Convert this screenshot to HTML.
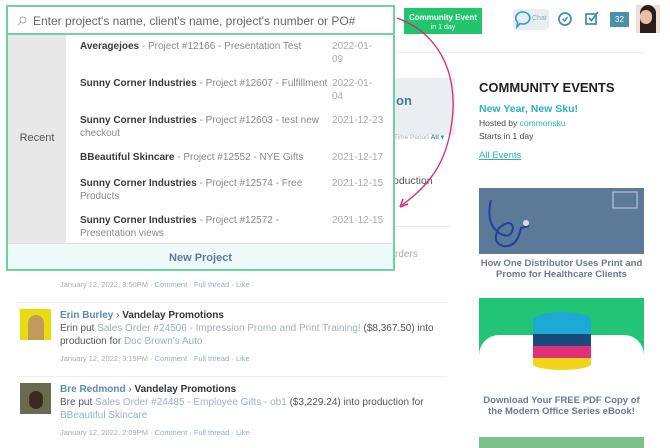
<!DOCTYPE html>
<html><head><meta charset="utf-8"><style>
*{margin:0;padding:0;box-sizing:border-box}
body{width:670px;height:448px;overflow:hidden;background:#fff;font-family:"Liberation Sans",sans-serif;position:relative;color:#333}
.a{position:absolute}
.dd{left:6px;top:5px;width:389px;height:266px;border:2px solid #6fd0a0;background:#fff}
.srch{left:0;top:0;width:385px;height:28px;border-bottom:2px solid #6fd0a0;font-size:12px;color:#666;padding:7px 0 0 25px}
.rec{left:0;top:28px;width:58px;height:208px;background:#e8e8e8;font-size:11px;color:#555;text-align:center;padding-top:97px}
.row{left:72px;width:250px;font-size:10px;line-height:13px;color:#888}
.row b{color:#3a3a3a}
.dt{left:324px;font-size:10px;color:#aaa;line-height:13px;width:60px}
.np{left:0;top:236px;width:385px;height:26px;background:#eefafa;border-top:1px solid #dde;font-size:11px;color:#5c7a99;font-weight:bold;text-align:center;padding-top:8px}
.post{left:60px;font-size:10px;line-height:13px;color:#555;width:390px}
.post .n{color:#5b8bb0;font-weight:bold}
.post .v{color:#333;font-weight:bold}
.post .l{color:#9ab0c8}
.meta{font-size:7.5px;color:#aaa;margin-top:4px}
.meta span{color:#8fb0c8}
.av{left:20px;width:31px;height:31px}
.hr{height:1px;background:#eee}
</style></head><body>
<div class="a" style="left:404px;top:8px;width:78px;height:26px;background:#22c56e;color:#fff;font-size:8px;font-weight:bold;text-align:center;padding-top:5px;line-height:9px">Community Event<br><span style="font-weight:normal;font-size:7px">in 1 day</span></div>
<div class="a" style="left:513px;top:9px;width:36px;height:21px;background:#e6eff3;border-radius:4px"></div>
<svg class="a" style="left:514px;top:10px" width="18" height="19"><path d="M9 2a7 6 0 1 1 -3 11.5l-3 3.5 0.5-5A7 6 0 0 1 9 2z" fill="none" stroke="#3a98c6" stroke-width="1.6"/></svg>
<div class="a" style="left:532px;top:15px;font-size:7px;color:#9ab">Chat</div>
<svg class="a" style="left:557px;top:11px" width="16" height="16"><circle cx="8" cy="8" r="6" fill="none" stroke="#3a8fb0" stroke-width="1.7"/><path d="M5.5 8l2 2 3-4" fill="none" stroke="#3a8fb0" stroke-width="1.5"/></svg>
<svg class="a" style="left:584px;top:10px" width="16" height="16"><rect x="2" y="4" width="10" height="10" fill="none" stroke="#3a8fb0" stroke-width="1.7"/><path d="M5 8l2.5 2.5L14 2" fill="none" stroke="#3a8fb0" stroke-width="1.8"/></svg>
<div class="a" style="left:610px;top:12px;width:19px;height:15px;background:#4a90a8;color:#fff;font-size:8px;text-align:center;padding-top:3px">32</div>
<div class="a" style="left:636px;top:5px;width:24px;height:28px;background:#f1e0d8"><div style="margin:0 auto;width:16px;height:28px;background:#2b1d18;border-radius:8px 8px 0 0"></div></div>
<div class="a" style="left:640px;top:10px;width:12px;height:14px;background:#e8c0aa;border-radius:6px"></div>
<div class="a hr" style="left:395px;top:52px;width:250px"></div>
<div class="a" style="left:395px;top:78px;width:60px;height:57px;background:#e9eef1"></div>
<div class="a" style="left:396px;top:93px;font-size:13px;font-weight:bold;color:#4a7a95">on</div>
<div class="a" style="left:394px;top:133px;font-size:6.5px;color:#aaa">Time Period <b style="color:#3a8fb0">All ▾</b></div>
<div class="a" style="left:393px;top:175px;font-size:10.5px;color:#555">oduction</div>
<div class="a hr" style="left:395px;top:226px;width:55px"></div>
<div class="a" style="left:395px;top:249px;font-size:10px;color:#aaa">rders</div>
<div class="a" style="left:479px;top:80px;font-size:13px;font-weight:bold;color:#222">COMMUNITY EVENTS</div>
<div class="a" style="left:479px;top:103px;font-size:10.5px;font-weight:bold;color:#2bb0c8">New Year, New Sku!</div>
<div class="a" style="left:479px;top:118px;font-size:8.5px;color:#444">Hosted by <span style="color:#2bb0c8">commonsku</span></div>
<div class="a" style="left:479px;top:131px;font-size:8.5px;color:#444">Starts in 1 day</div>
<div class="a" style="left:479px;top:150px;font-size:9.5px;color:#2bb0c8;text-decoration:underline">All Events</div>
<div class="a" style="left:479px;top:188px;width:165px;height:66px;background:#5a7a97"></div>
<svg class="a" style="left:479px;top:188px" width="165" height="66"><path d="M12 12q-6 25 10 34q10 5 12 -6q-2 -10 -14 0q-8 14 4 18q14 2 18 -18 l8 -2" fill="none" stroke="#2040a8" stroke-width="2"/><circle cx="47" cy="35" r="3" fill="#ddd"/><rect x="134" y="4" width="24" height="16" fill="none" stroke="#ccd" stroke-width="1"/></svg>
<div class="a" style="left:479px;top:258px;width:165px;text-align:center;font-size:9.5px;line-height:11px;font-weight:bold;color:#6a7a90">How One Distributor Uses Print and Promo for Healthcare Clients</div>
<div class="a" style="left:479px;top:298px;width:165px;height:90px;background:#22c576"></div>
<div class="a" style="left:479px;top:335px;width:165px;height:53px;background:#fff;border-radius:20px 20px 0 0"></div>
<div class="a" style="left:533px;top:312px;width:58px;height:16px;background:#1ea8d4;border-radius:50%"></div>
<div class="a" style="left:533px;top:320px;width:58px;height:14px;background:#1ea8d4"></div>
<div class="a" style="left:533px;top:334px;width:58px;height:12px;background:#174c7a"></div>
<div class="a" style="left:533px;top:346px;width:58px;height:12px;background:#e0307a"></div>
<div class="a" style="left:533px;top:358px;width:58px;height:12px;background:#f2d41a;border-radius:0 0 29px 29px/0 0 6px 6px"></div>
<div class="a" style="left:479px;top:395px;width:165px;text-align:center;font-size:9.5px;line-height:11px;font-weight:bold;color:#6a7a90">Download Your FREE PDF Copy of the Modern Office Series eBook!</div>
<div class="a" style="left:479px;top:437px;width:165px;height:11px;background:#7cc08a"></div>
<div class="a hr" style="left:17px;top:302px;width:430px"></div>
<div class="a" style="left:60px;top:280px;font-size:7.5px;color:#aaa">January 12, 2022, 3:50PM · <span style="color:#8fb0c8">Comment</span> · <span style="color:#8fb0c8">Full thread</span> · <span style="color:#8fb0c8">Like</span></div>
<div class="a av" style="top:309px;background:#e6dc10"><div style="margin:6px auto 0;width:16px;height:25px;background:#c49a5a;border-radius:8px 8px 0 0"></div></div>
<div class="a post" style="top:309px"><span class="n">Erin Burley</span> › <span class="v">Vandelay Promotions</span><br>Erin put <span class="l">Sales Order #24506 - Impression Promo and Print Training!</span> ($8,367.50) into production for <span class="l">Doc Brown's Auto</span><div class="meta">January 12, 2022, 3:19PM · <span>Comment</span> · <span>Full thread</span> · <span>Like</span></div></div>
<div class="a hr" style="left:17px;top:376px;width:430px"></div>
<div class="a av" style="top:383px;background:#6a6a52"><div style="margin:8px auto 0;width:14px;height:18px;background:#3a2a20;border-radius:7px"></div></div>
<div class="a post" style="top:383px"><span class="n">Bre Redmond</span> › <span class="v">Vandelay Promotions</span><br>Bre put <span class="l">Sales Order #24485 - Employee Gifts - ob1</span> ($3,229.24) into production for <span class="l">BBeautiful Skincare</span><div class="meta">January 12, 2022, 2:09PM · <span>Comment</span> · <span>Full thread</span> · <span>Like</span></div></div>
<div class="a dd">
<div class="a srch">Enter project's name, client's name, project's number or PO#</div>
<svg class="a" style="left:9px;top:9px" width="10" height="10"><circle cx="6" cy="4" r="3" fill="none" stroke="#aaa"/><path d="M4 6L1 9" stroke="#aaa"/></svg>
<div class="a rec">Recent</div>
<div class="a row" style="top:33px"><b>Averagejoes</b> - Project #12166 - Presentation Test</div><div class="a dt" style="top:33px">2022-01-<br>09</div>
<div class="a row" style="top:70px;width:260px"><b>Sunny Corner Industries</b> - Project #12607 - Fulfillment</div><div class="a dt" style="top:70px">2022-01-<br>04</div>
<div class="a row" style="top:107px"><b>Sunny Corner Industries</b> - Project #12603 - test new checkout</div><div class="a dt" style="top:107px">2021-12-23</div>
<div class="a row" style="top:144px"><b>BBeautiful Skincare</b> - Project #12552 - NYE Gifts</div><div class="a dt" style="top:144px">2021-12-17</div>
<div class="a row" style="top:170px"><b>Sunny Corner Industries</b> - Project #12574 - Free Products</div><div class="a dt" style="top:170px">2021-12-15</div>
<div class="a row" style="top:207px"><b>Sunny Corner Industries</b> - Project #12572 - Presentation views</div><div class="a dt" style="top:207px">2021-12-15</div>
<div class="a np">New Project</div>
</div>
<svg class="a" style="left:0;top:0" width="670" height="448"><path d="M397 18C430 30 455 60 453 110C450 160 430 185 402 205" fill="none" stroke="#d6287a" stroke-width="1.3"/><path d="M400 207l3-8M400 207l8-3" stroke="#d6287a" stroke-width="1.5"/></svg>
</body></html>
